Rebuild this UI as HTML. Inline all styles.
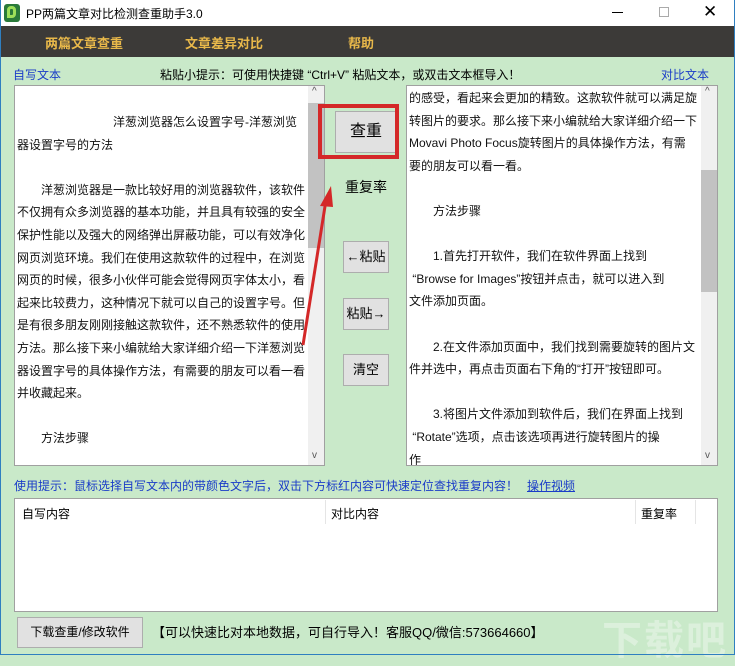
<!DOCTYPE html>
<html><head><meta charset="utf-8"><style>
*{margin:0;padding:0;box-sizing:border-box}
body{width:735px;height:655px;position:relative;overflow:hidden;background:#c9e9c9;font-family:"Liberation Sans","Noto Sans CJK SC","WenQuanYi Zen Hei",sans-serif;font-size:12px;color:#000}
.a{position:absolute;white-space:nowrap}
#title{left:0;top:0;width:735px;height:26px;background:#fff}
#menu{left:0;top:26px;width:735px;height:31px;background:#3c3a38}
.mi{color:#e8b84a;font-weight:bold;font-size:13px;top:33px}
.ta{background:#fff;border:1px solid #a0a0a0}
.sb{background:#f0f0f0}
.th{background:#c2c2c2}
.txt{font-size:12px;line-height:22.6px;color:#111;white-space:nowrap}
.btn{background:#e1e1e1;border:1px solid #adadad;text-align:center;font-size:13px}
</style></head><body>
<div class="a" style="left:0;top:0;width:1px;height:655px;background:#2f7fc0;z-index:5"></div>
<div class="a" style="left:734px;top:0;width:1px;height:655px;background:#2f7fc0;z-index:5"></div>
<div class="a" style="left:0;top:654px;width:735px;height:1px;background:#2f7fc0;z-index:5"></div>
<div class="a" id="title"></div>
<div class="a" style="left:4px;top:4px;width:16px;height:18px;background:#2a7a3a;border-radius:3px"></div>
<div class="a" style="left:7px;top:6px;width:9px;height:12px;border:3px solid #9ee05a;border-radius:4px 4px 4px 0"></div>
<div class="a" style="left:26px;top:5px;font-size:12px">PP两篇文章对比检测查重助手3.0</div>
<div class="a" style="left:612px;top:12px;width:11px;height:1px;background:#000"></div>
<div class="a" style="left:659px;top:7px;width:10px;height:10px;border:1px solid #aaa"></div>
<div class="a" style="left:703px;top:2px;font-size:17px;font-weight:300">✕</div>
<div class="a" id="menu"></div>
<div class="a mi" style="left:45px">两篇文章查重</div>
<div class="a mi" style="left:185px">文章差异对比</div>
<div class="a mi" style="left:348px">帮助</div>
<div class="a" style="left:13px;top:66px;color:#1a3cc8">自写文本</div>
<div class="a" style="left:160px;top:66px">粘贴小提示：可使用快捷键 “Ctrl+V” 粘贴文本，或双击文本框导入！</div>
<div class="a" style="left:661px;top:66px;color:#1a3cc8">对比文本</div>

<div class="a ta" style="left:14px;top:85px;width:311px;height:381px;overflow:hidden">
<div class="a sb" style="left:293px;top:0;width:16px;height:379px"></div>
<div class="a th" style="left:293px;top:17px;width:16px;height:145px"></div>
<div class="a" style="left:297px;top:0;font-size:10px;color:#555">^</div>
<div class="a" style="left:297px;top:364px;font-size:10px;color:#555">v</div>
<div class="a txt" style="left:2px;top:25px">
<div style="padding-left:96px">洋葱浏览器怎么设置字号-洋葱浏览</div>
<div>器设置字号的方法</div><div>&nbsp;</div>
<div>　　洋葱浏览器是一款比较好用的浏览器软件，该软件<br>不仅拥有众多浏览器的基本功能，并且具有较强的安全<br>保护性能以及强大的网络弹出屏蔽功能，可以有效净化<br>网页浏览环境。我们在使用这款软件的过程中，在浏览<br>网页的时候，很多小伙伴可能会觉得网页字体太小，看<br>起来比较费力，这种情况下就可以自己的设置字号。但<br>是有很多朋友刚刚接触这款软件，还不熟悉软件的使用<br>方法。那么接下来小编就给大家详细介绍一下洋葱浏览<br>器设置字号的具体操作方法，有需要的朋友可以看一看<br>并收藏起来。</div>
<div>&nbsp;</div><div>　　方法步骤</div></div>
</div>

<div class="a ta" style="left:406px;top:85px;width:312px;height:381px;overflow:hidden">
<div class="a sb" style="left:294px;top:0;width:16px;height:379px"></div>
<div class="a th" style="left:294px;top:84px;width:16px;height:122px"></div>
<div class="a" style="left:298px;top:0;font-size:10px;color:#555">^</div>
<div class="a" style="left:298px;top:364px;font-size:10px;color:#555">v</div>
<div class="a txt" style="left:2px;top:1px">的感受，看起来会更加的精致。这款软件就可以满足旋<br>转图片的要求。那么接下来小编就给大家详细介绍一下<br>Movavi Photo Focus旋转图片的具体操作方法，有需<br>要的朋友可以看一看。<br>&nbsp;<br>　　方法步骤<br>&nbsp;<br>　　1.首先打开软件，我们在软件界面上找到<br>&nbsp;“Browse for Images”按钮并点击，就可以进入到<br>文件添加页面。<br>&nbsp;<br>　　2.在文件添加页面中，我们找到需要旋转的图片文<br>件并选中，再点击页面右下角的“打开”按钮即可。<br>&nbsp;<br>　　3.将图片文件添加到软件后，我们在界面上找到<br>&nbsp;“Rotate”选项，点击该选项再进行旋转图片的操<br>作</div>
</div>

<div class="a btn" style="left:335px;top:111px;width:62px;height:42px;line-height:40px;font-size:16px">查重</div>
<div class="a" style="left:318px;top:104px;width:81px;height:55px;border:4px solid #d42828"></div>
<div class="a" style="left:345px;top:177px;font-size:14px">重复率</div>
<div class="a btn" style="left:343px;top:241px;width:46px;height:32px;line-height:30px">←粘贴</div>
<div class="a btn" style="left:343px;top:298px;width:46px;height:32px;line-height:30px">粘贴→</div>
<div class="a btn" style="left:343px;top:354px;width:46px;height:32px;line-height:30px">清空</div>
<svg class="a" style="left:0;top:0" width="735" height="655"><line x1="303" y1="345" x2="326" y2="200" stroke="#d42828" stroke-width="3"/><polygon points="331,186 320,206 333,207" fill="#d42828"/></svg>

<div class="a" style="left:14px;top:477px;color:#1a3cc8">使用提示：鼠标选择自写文本内的带颜色文字后，双击下方标红内容可快速定位查找重复内容！</div>
<div class="a" style="left:527px;top:477px;color:#1a3cc8;text-decoration:underline">操作视频</div>
<div class="a" style="left:14px;top:498px;width:704px;height:114px;background:#fff;border:1px solid #a0a0a0"></div>
<div class="a" style="left:325px;top:500px;width:1px;height:24px;background:#e5e5e5"></div>
<div class="a" style="left:635px;top:500px;width:1px;height:24px;background:#e5e5e5"></div>
<div class="a" style="left:695px;top:500px;width:1px;height:24px;background:#e5e5e5"></div>
<div class="a" style="left:22px;top:505px">自写内容</div>
<div class="a" style="left:331px;top:505px">对比内容</div>
<div class="a" style="left:641px;top:505px">重复率</div>
<div class="a btn" style="left:17px;top:617px;width:126px;height:31px;line-height:29px;font-size:12px">下载查重/修改软件</div>
<div class="a" style="left:152px;top:622px;font-size:13px">【可以快速比对本地数据，可自行导入！客服QQ/微信:573664660】</div>
<div class="a" style="left:602px;top:608px;font-size:40px;color:rgba(255,255,255,0.35);font-weight:bold;letter-spacing:2px">下载吧</div>
</body></html>
